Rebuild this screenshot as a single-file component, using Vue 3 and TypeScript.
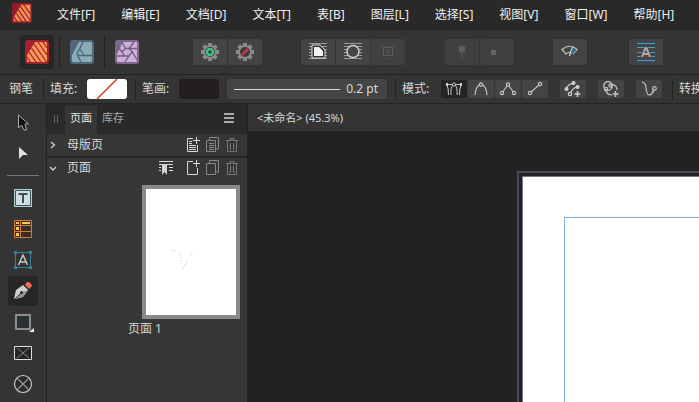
<script setup lang="ts">
import { ref } from 'vue'

const menus: string[] = ['文件[F]', '编辑[E]', '文档[D]', '文本[T]', '表[B]', '图层[L]', '选择[S]', '视图[V]', '窗口[W]', '帮助[H]']
const activeTool = ref('pen')
const activePersona = ref('publisher')
const activeMode = ref(0)
const teeth: number[] = [0, 45, 90, 135, 180, 225, 270, 315]
</script>

<template>
  <div class="app">
    <header class="menubar">
      <svg class="logo" width="20" height="20" viewBox="0 0 24 24" aria-hidden="true">
        <rect width="24" height="24" rx="2" fill="#8f1d2b" />
        <path d="M2 17 11 2H22V22H2Z" fill="#f98d52" />
        <path d="M5 12 12 22M7.500 8 17 22M10 4 22 21M14 2 22 13M2 16 6 22" stroke="#8f1d2b" stroke-width="1.300" />
      </svg>
      <nav class="menus">
        <button v-for="m in menus" :key="m" type="button" class="menu">{{ m }}</button>
      </nav>
    </header>

    <div class="toolbar">
      <div class="personas">
        <button type="button" class="persona" :class="{ on: activePersona === 'publisher' }" aria-label="Publisher" @click="activePersona = 'publisher'">
          <svg width="24" height="24" viewBox="0 0 24 24">
            <rect width="24" height="24" rx="3" fill="#a3202e" />
            <path d="M2 15 10 2H21Q22 2 22 3V21Q22 22 21 22H3Q2 22 2 21Z" fill="#fb9558" />
            <path d="M4 12 11 22M6.500 8 16 22M9 4 21.500 22M13 2 22 15M18 2 22 8M2 17 5.500 22" stroke="#98202c" stroke-width="1.200" />
          </svg>
        </button>
        <i class="sep tall"></i>
        <button type="button" class="persona" :class="{ on: activePersona === 'designer' }" aria-label="Designer" @click="activePersona = 'designer'">
          <svg width="24" height="24" viewBox="0 0 24 24">
            <rect width="24" height="24" rx="3" fill="#50677d" />
            <path d="M2 15 9 2H21Q22 2 22 3V21Q22 22 21 22H3Q2 22 2 21Z" fill="#8aacb7" />
            <path d="M13 2 7 14 11 22M7 15.500H22M10 9 14 15" fill="none" stroke="#49657a" stroke-width="1.300" />
          </svg>
        </button>
        <i class="sep tall"></i>
        <button type="button" class="persona" :class="{ on: activePersona === 'photo' }" aria-label="Photo" @click="activePersona = 'photo'">
          <svg width="24" height="24" viewBox="0 0 24 24">
            <rect width="24" height="24" rx="3" fill="#7d698b" />
            <path d="M2 14 8 2H21Q22 2 22 3V21Q22 22 21 22H3Q2 22 2 21Z" fill="#cbb0d3" />
            <path d="M7 2 10.500 8.500H22M19 2 14 8.500 17.500 12 22 20M17 12 14 16 10 22M14 16H2M9.500 16 7 12 2 6M7 12 10.500 8.500" fill="none" stroke="#725e80" stroke-width="1.300" />
          </svg>
        </button>
      </div>

      <div class="group preflight">
        <button type="button" class="tb" aria-label="预检">
          <svg width="20" height="20" viewBox="0 0 20 20">
            <rect v-for="t in teeth" :key="t" x="8" y="1" width="4" height="4" fill="#8a8a8a" :transform="`rotate(${t} 10 10)`" />
            <circle cx="10" cy="10" r="6" fill="#303c36" stroke="#8a8a8a" stroke-width="2" />
            <circle cx="10" cy="10" r="3" fill="none" stroke="#3fc380" stroke-width="2.600" />
          </svg>
        </button>
        <button type="button" class="tb" aria-label="预检关闭">
          <svg width="20" height="20" viewBox="0 0 20 20">
            <rect v-for="t in teeth" :key="t" x="8" y="1" width="4" height="4" fill="#8a8a8a" :transform="`rotate(${t} 10 10)`" />
            <circle cx="10" cy="10" r="6" fill="#3a3a3a" stroke="#8a8a8a" stroke-width="2" />
            <path d="M7 13 13 7" stroke="#cb3445" stroke-width="2.600" />
          </svg>
        </button>
      </div>

      <div class="group wrap">
        <button type="button" class="tb" aria-label="文本绕排">
          <svg width="20" height="20" viewBox="0 0 20 20" fill="none">
            <path d="M1 1.500H19M1 4.500H19M1 7.500H19M1 10.500H19M1 13.500H19M1 16.500H19" stroke="#9c9c9c" />
            <path d="M4 3H12L17 8V16H4Z" fill="#333" stroke="#ddd" />
            <path d="M6 5H11L15 9V14H6Z" fill="#f2f2f2" />
          </svg>
        </button>
        <button type="button" class="tb" aria-label="绕排轮廓">
          <svg width="20" height="20" viewBox="0 0 20 20" fill="none">
            <path d="M1 1.500H19M1 4.500H19M1 7.500H19M1 10.500H19M1 13.500H19M1 16.500H19" stroke="#9c9c9c" />
            <circle cx="10" cy="9.500" r="6" fill="#454545" stroke="#d4d4d4" stroke-width="1.400" />
          </svg>
        </button>
        <button type="button" class="tb" aria-label="编辑绕排" disabled>
          <svg width="20" height="20" viewBox="0 0 20 20" fill="none">
            <path d="M1 1.500H19M1 4.500H19M1 13.500H19M1 16.500H19" stroke="#494949" />
            <rect x="5.500" y="5.500" width="9" height="8" stroke="#5c5c5c" />
            <path d="M8 7.500 12 11.500M12 7.500 8 11.500" stroke="#606060" />
          </svg>
        </button>
      </div>

      <div class="group anchor">
        <button type="button" class="tb" aria-label="固定" disabled>
          <svg width="20" height="20" viewBox="0 0 20 20">
            <circle cx="10" cy="7" r="3.500" fill="#5c5c5c" /><path d="M10 8V16" stroke="#5c5c5c" />
          </svg>
        </button>
        <button type="button" class="tb" aria-label="内嵌" disabled>
          <svg width="20" height="20" viewBox="0 0 20 20">
            <path d="M1 4.500H19M10 8.500H19M10 11.500H19M1 15.500H19" stroke="#3e3e3e" /><rect x="4" y="8" width="5" height="5" fill="#666" />
          </svg>
        </button>
      </div>

      <div class="group preview">
        <button type="button" class="tb" aria-label="预览模式">
          <svg width="20" height="20" viewBox="0 0 20 20" fill="none">
            <path d="M2 7.500Q9.500 1 17 7.500L13 12Q9.500 9 6 12Z" stroke="#c5c5c5" stroke-width="1.200" />
            <path d="M14 6 16.500 8 13 12H11Z" fill="#2e789f" /><path d="M13 5Q10 9 9.500 14" stroke="#e0e0e0" stroke-width="1.200" />
          </svg>
        </button>
      </div>
      <div class="group baseline">
        <button type="button" class="tb" aria-label="基线网格">
          <svg width="20" height="20" viewBox="0 0 20 20" fill="none">
            <path d="M1 1.500H19M1 5.500H19M1 10.500H19M1 14.500H19M1 18.500H19" stroke="#3da4da" stroke-width="1.200" />
            <path d="M4 15 8 5H12L16 15Z" fill="#484848" />
            <path d="M6 15 9.500 6H10.500L14 15M7.500 12H12.500" stroke="#ababab" stroke-width="2" />
          </svg>
        </button>
      </div>
    </div>

    <div class="context">
      <span class="toolname">钢笔</span>
      <i class="sep"></i>
      <div class="field">
        <label for="fill">填充:</label>
        <button id="fill" type="button" class="swatch none">
          <svg width="40" height="20" viewBox="0 0 40 20"><path d="M10 20 30 0" stroke="#d93b30" stroke-width="1.500" /></svg>
        </button>
      </div>
      <i class="sep"></i>
      <div class="field">
        <label for="stroke">笔画:</label>
        <button id="stroke" type="button" class="swatch dark"></button>
      </div>
      <button type="button" class="width"><i class="line"></i><span>0.2 pt</span></button>
      <i class="sep"></i>
      <span class="modelabel">模式:</span>
      <div class="modes">
        <button type="button" class="mode" :class="{ on: activeMode === 0 }" aria-label="钢笔模式" @click="activeMode = 0">
          <svg width="18" height="16" viewBox="0 0 18 16" fill="none" stroke="#c8c8c8">
            <path d="M3.500 14Q3.500 7 2 4M6 14Q5.500 6 8 4M14.500 14Q14.500 7 16 4M12 14Q12.500 6 10 4M2 3.500H7M11 3.500H16" /><circle cx="9" cy="3.500" r="1.600" /><path d="M1 2h2v3H1zM15 2h2v3h-2z" fill="#d0d0d0" stroke="none" />
          </svg>
        </button>
        <button type="button" class="mode" :class="{ on: activeMode === 1 }" aria-label="智能模式" @click="activeMode = 1">
          <svg width="18" height="16" viewBox="0 0 18 16" fill="none" stroke="#c4c4c4" stroke-width="1.200">
            <path d="M3 14Q4 5 7.500 4M15 14Q14 5 10.500 4" /><circle cx="9" cy="3.500" r="1.600" />
          </svg>
        </button>
        <button type="button" class="mode" :class="{ on: activeMode === 2 }" aria-label="多边形模式" @click="activeMode = 2">
          <svg width="18" height="16" viewBox="0 0 18 16" fill="none" stroke="#c4c4c4" stroke-width="1.200">
            <path d="M4 10.500 8 5M10 5 14 10.500" /><circle cx="9" cy="3.500" r="1.600" /><circle cx="3" cy="12" r="1.600" /><circle cx="15" cy="12" r="1.600" />
          </svg>
        </button>
        <button type="button" class="mode" :class="{ on: activeMode === 3 }" aria-label="直线模式" @click="activeMode = 3">
          <svg width="18" height="16" viewBox="0 0 18 16" fill="none" stroke="#c4c4c4" stroke-width="1.200">
            <path d="M5 11 13 4" /><circle cx="4" cy="12" r="1.600" /><circle cx="14" cy="3" r="1.600" />
          </svg>
        </button>
      </div>
      <button type="button" class="mode" aria-label="添加新曲线">
        <svg width="18" height="16" viewBox="0 0 18 16" fill="none" stroke="#d0d0d0" stroke-width="1.200">
          <path d="M2 8Q4 3 10 2M7 12Q8 7 13 6" /><circle cx="2.500" cy="8" r="1.400" fill="#d0d0d0" /><circle cx="9.500" cy="2" r="1.400" fill="#d0d0d0" /><circle cx="13.500" cy="6" r="1.400" fill="#d0d0d0" /><circle cx="6" cy="13" r="1.600" /><path d="M13.500 10V16M10.500 13H16.500" stroke-width="1.500" />
        </svg>
      </button>
      <button type="button" class="mode" aria-label="合并形状">
        <svg width="18" height="16" viewBox="0 0 18 16" fill="none" stroke="#c4c4c4" stroke-width="1.200">
          <circle cx="6" cy="5" r="4.300" /><path d="M15 9A5 5 0 0 0 8 4M4 8Q4 14 10 14" /><circle cx="8.500" cy="4.500" r="1.600" /><circle cx="4" cy="8" r="1.600" /><path d="M13.500 10V16M10.500 13H16.500" stroke-width="1.500" />
        </svg>
      </button>
      <button type="button" class="mode" aria-label="橡皮筋">
        <svg width="18" height="16" viewBox="0 0 18 16" fill="none" stroke="#c4c4c4" stroke-width="1.200">
          <path d="M2 1Q6 2 6 7 7 14 9 14 12 14 13 10" /><circle cx="14.500" cy="7.500" r="1.800" /><path d="M13 8V12" />
        </svg>
      </button>
      <i class="sep last"></i>
      <span>转换:</span>
    </div>

    <main class="work">
      <aside class="tools">
        <button type="button" class="tool" aria-label="移动工具" :class="{ on: activeTool === 'move' }" @click="activeTool = 'move'">
          <svg width="20" height="20" viewBox="0 0 20 20"><path d="M5.500 3V16L8.500 13 11 18H13.500L12 12H15.500Z" fill="#101010" stroke="#aaa" /></svg>
        </button>
        <button type="button" class="tool node" aria-label="节点工具" :class="{ on: activeTool === 'node' }" @click="activeTool = 'node'">
          <svg width="20" height="20" viewBox="0 0 20 20"><path d="M6 4 15 12H10L6 16Z" fill="#e2e2e2" /></svg>
        </button>
        <i class="rule"></i>
        <button type="button" class="tool" aria-label="文本框工具" :class="{ on: activeTool === 'frame' }" @click="activeTool = 'frame'">
          <svg width="20" height="20" viewBox="0 0 20 20"><path d="M1 1H19V19H1Z" fill="#b3d2d7" /><path d="M2.500 2.500H17.500V17.500H2.500Z" fill="#d5dde0" stroke="#365764" /><path d="M5.500 6H14.500M10 6V15" stroke="#344f62" stroke-width="2" /></svg>
        </button>
        <button type="button" class="tool" aria-label="表格工具" :class="{ on: activeTool === 'table' }" @click="activeTool = 'table'">
          <svg width="20" height="20" viewBox="0 0 20 20" fill="none"><path d="M1.500 1.500H18.500V18.500H1.500ZM1.500 6.500H18.500M1.500 12.500H18.500M7.500 1.500V18.500" fill="#3c2b24" stroke="#d27b3b" /><path d="M3 3h3v2H3zM9 3h8v2H9zM3 8h3v3H3zM3 14h3v3H3z" fill="#f0c75c" /></svg>
        </button>
        <button type="button" class="tool" aria-label="美术字工具" :class="{ on: activeTool === 'art' }" @click="activeTool = 'art'">
          <svg width="20" height="20" viewBox="0 0 20 20" fill="none"><path d="M2.500 2.500H17.500V17.500H2.500Z" stroke="#397b9d" /><path d="M1 1h3v3H1zM16 1h3v3h-3zM1 16h3v3H1zM16 16h3v3h-3z" fill="#397b9d" /><path d="M5.500 15 10 5 14.500 15M7 12H13" stroke="#c8c8c8" stroke-width="1.400" /></svg>
        </button>
        <button type="button" class="tool" aria-label="钢笔工具" :class="{ on: activeTool === 'pen' }" @click="activeTool = 'pen'">
          <svg width="20" height="20" viewBox="0 0 20 20"><path d="M1 18 3 9 10 4 15 9 10 16Z" fill="#cfcfcf" /><path d="M2 18 8 11.500 15 9 10 16Z" fill="#929292" /><path d="M2 18 8 12" stroke="#333" /><circle cx="8.500" cy="11.500" r="1.500" fill="#292929" /><path d="M12 4 14 1H16L19 4V5L16 8Z" fill="#ed6a54" /></svg>
        </button>
        <button type="button" class="tool shape" aria-label="矩形工具" :class="{ on: activeTool === 'rect' }" @click="activeTool = 'rect'">
          <svg width="24" height="20" viewBox="0 0 24 20"><rect x="5" y="3" width="14" height="14" fill="#283234" stroke="#8d8d8d" stroke-width="2" /><path d="M23 16V20H18Z" fill="#eee" /></svg>
        </button>
        <button type="button" class="tool" aria-label="图片框矩形工具" :class="{ on: activeTool === 'pic' }" @click="activeTool = 'pic'">
          <svg width="20" height="20" viewBox="0 0 20 20"><path d="M1.500 3.500H18.500V16.500H1.500Z" fill="#252525" stroke="#e0e0e0" /><path d="M4 5 16 15M16 5 4 15" stroke="#858585" /></svg>
        </button>
        <button type="button" class="tool" aria-label="图片框椭圆工具" :class="{ on: activeTool === 'oval' }" @click="activeTool = 'oval'">
          <svg width="20" height="20" viewBox="0 0 20 20"><circle cx="10" cy="10" r="8.500" fill="#292929" stroke="#ccc" stroke-width="1.200" /><path d="M5 5 15 15M15 5 5 15" stroke="#999" stroke-width="1.200" /></svg>
        </button>
      </aside>

      <section class="panel">
        <div class="tabs">
          <i class="grip"></i>
          <button type="button" class="tab on">页面</button>
          <button type="button" class="tab">库存</button>
          <button type="button" class="burger" aria-label="面板菜单"><i></i><i></i><i></i></button>
        </div>
        <div class="row masters">
          <button type="button" class="fold"><svg width="8" height="8" viewBox="0 0 8 8" fill="none"><path d="M2 1 5.500 4 2 7" stroke="#d0d0d0" stroke-width="1.400" /></svg>母版页</button>
          <div class="acts">
            <button type="button" class="act" aria-label="添加母版"><svg width="14" height="16" viewBox="0 0 14 16" fill="none"><path d="M7 1.500H1.500V14.500H11.500V8M10.500 0V7M7 3.500H14M3 4.500H6M3 6.500H6M3 8.500H10M3 10.500H10M3 12.500H10" stroke="#d8d8d8" /></svg></button>
            <button type="button" class="act dim" aria-label="复制母版"><svg width="14" height="16" viewBox="0 0 14 16" fill="none"><path d="M3.500 3V.500H12.500V12H10M1 3.500H9.500V14.500H.500V3.500M3 6.500H8M3 8.500H8M3 10.500H8M3 12.500H8" stroke="#888" /></svg></button>
            <button type="button" class="act dim" aria-label="删除母版"><svg width="12" height="16" viewBox="0 0 12 16" fill="none"><path d="M0 3.500H12M4 3V1.500H8V3M1.500 4V14.500H10.500V4M4.500 6V13M7.500 6V13" stroke="#777" /></svg></button>
          </div>
        </div>
        <div class="row pages">
          <button type="button" class="fold"><svg width="8" height="8" viewBox="0 0 8 8" fill="none"><path d="M1 3 4 6 7 3" stroke="#d0d0d0" stroke-width="1.400" /></svg>页面</button>
          <div class="acts">
            <button type="button" class="act mark" aria-label="章节管理器"><svg width="14" height="16" viewBox="0 0 14 16"><path d="M0 1.500H14M0 4.500H14M0 7.500H2M0 10.500H2M10 7.500H14M10 10.500H14" stroke="#ddd" /><path d="M3 4H8V15L5.500 12 3 15Z" fill="#d4d4d4" /></svg></button>
            <button type="button" class="act" aria-label="添加页面"><svg width="14" height="16" viewBox="0 0 14 16" fill="none"><path d="M7 1.500H1.500V14.500H11.500V8M10.500 0V7M7 3.500H14" stroke="#d8d8d8" /></svg></button>
            <button type="button" class="act dim" aria-label="复制页面"><svg width="14" height="16" viewBox="0 0 14 16" fill="none"><path d="M3.500 3V.500H12.500V12H10M1 3.500H9.500V14.500H.500V3.500" stroke="#888" /></svg></button>
            <button type="button" class="act dim" aria-label="删除页面"><svg width="12" height="16" viewBox="0 0 12 16" fill="none"><path d="M0 3.500H12M4 3V1.500H8V3M1.500 4V14.500H10.500V4M4.500 6V13M7.500 6V13" stroke="#777" /></svg></button>
          </div>
        </div>
        <div class="thumbs">
          <figure class="page">
            <div class="thumb">
              <svg width="90" height="126" viewBox="0 0 90 126" fill="none"><path d="M25 61.500H30M32 63Q36 67 35.500 72M37 79 42 71M44 66 47 61" stroke="#bbb" stroke-dasharray="1 2" /></svg>
            </div>
            <figcaption>页面 1</figcaption>
          </figure>
        </div>
      </section>

      <section class="document">
        <div class="doctab">&lt;未命名&gt; (45.3%)</div>
        <div class="canvas">
          <div class="bleed"><div class="sheet"><div class="guide"></div></div></div>
        </div>
      </section>
    </main>
  </div>
</template>

<style>
body { margin: 0; background: #222; }
</style>

<style scoped>
* { box-sizing: border-box; }
.app { display: flex; flex-direction: column; height: 100vh; overflow: hidden; background: #343434; color: #d8d8d8; font: 12px/16px "Noto Sans", "Noto Sans CJK SC", sans-serif; }
button { display: flex; align-items: center; justify-content: center; flex: none; margin: 0; padding: 0; border: 0; background: none; color: inherit; font: inherit; }
svg { display: block; flex: none; }
.menubar, .toolbar, .context { display: flex; flex: none; overflow: hidden; white-space: nowrap; }
.menubar { height: 30px; padding-left: 12px; background: #292929; border-bottom: 1px solid #222; align-items: center; }
.logo { margin-bottom: 3px; }
.menus { display: flex; gap: 26px; margin-left: 25px; padding-top: 1px; color: #f0f0f0; }

.toolbar { height: 45px; padding: 0 20px; align-items: center; border-bottom: 1px solid #222; }
.personas, .group { display: flex; flex: none; align-items: center; }
.personas { gap: 5px; }
.persona { width: 34px; height: 34px; border-radius: 3px; }
.persona.on { background: #262626; }
.sep { flex: none; width: 1px; height: 21px; background: #222; }
.tall { height: 34px; }
.group { gap: 1px; }
.tb { width: 34px; height: 26px; border-radius: 2px; background: #444; }
.tb:disabled { background: #404040; }
.preflight { margin-left: 49px; }
.wrap, .preview { margin-left: 39px; }
.anchor { margin-left: 40px; }
.baseline { margin-left: 42px; }

.context { height: 29px; padding-left: 9px; align-items: center; border-bottom: 1px solid #222; }
.toolname { margin-right: 10px; }
.field { display: flex; flex: none; align-items: center; justify-content: space-between; width: 77px; margin: 0 8px 0 6px; }
.swatch { width: 40px; height: 20px; border-radius: 3px; overflow: hidden; }
.none { background: #fff; }
.dark { background: #231f20; }
.width { width: 160px; height: 20px; padding: 0 9px 0 7px; margin-right: 8px; border-radius: 3px; background: #444; justify-content: space-between; gap: 6px; }
.line { flex: 1; height: 1px; background: #ddd; }
.modelabel { width: 39px; margin-left: 6px; flex: none; }
.modes { display: flex; flex: none; gap: 1px; }
.mode { width: 26px; height: 18px; border-radius: 2px; background: #444; }
.mode.on { background: #242424; }
.context > .mode { margin-left: 12px; }
.last { margin: 0 6px 0 10px; }

.work { display: flex; flex: 1; min-height: 0; }
.tools { display: flex; flex-direction: column; flex: none; align-items: center; width: 47px; padding-top: 3px; border-right: 1px solid #222; gap: 1px; }
.tool { width: 30px; height: 30px; border-radius: 3px; }
.tool.on { background: #262626; }
.rule { flex: none; width: 32px; height: 1px; margin: 6px 0; background: #777; }

.panel { display: flex; flex-direction: column; flex: none; width: 201px; border-right: 1px solid #222; background: #363636; }
.tabs { display: flex; flex: none; height: 30px; padding-top: 2px; background: #292929; font-size: 11px; }
.grip { width: 4px; height: 8px; margin: 9px 7px; border: solid #666; border-width: 0 1px; }
.tab { width: 32px; color: #aaa; padding-bottom: 4px; }
.tab.on { background: #363636; color: #e4e4e4; }
.burger { flex-direction: column; gap: 2px; width: 10px; margin: 0 13px 4px auto; }
.burger i { width: 10px; height: 2px; background: #aaa; }
.row { display: flex; flex: none; justify-content: space-between; align-items: center; height: 24px; padding: 0 9px 0 2px; }
.masters { border-bottom: 2px solid #252525; }
.pages { height: 20px; }
.fold { gap: 10px; height: 20px; }
.acts { display: flex; align-items: center; gap: 6px; }
.act { height: 16px; }
.mark { margin-right: 7px; }
.thumbs { display: flex; justify-content: flex-end; padding: 7px 7px 0 0; }
.page { display: flex; flex-direction: column; gap: 2px; margin: 0; }
.thumb { border: 4px solid #8a8a8a; background: #fff; }
.page figcaption { width: 64px; margin-left: -14px; }

.document { display: flex; flex-direction: column; flex: 1; min-width: 0; background: #222; }
.doctab { flex: none; height: 28px; padding: 6px 9px; border-bottom: 1px solid #222; background: #343434; font-size: 11px; }
.canvas { display: flex; flex: 1; min-height: 0; padding: 39px 0 0 269px; overflow: hidden; }
.bleed { display: flex; flex: 1; padding: 3px 0 0 3px; border: solid #4b4763; border-width: 2px 0 0 2px; }
.sheet { display: flex; flex: 1; padding: 40px 0 0 41px; background: #fff; background-clip: padding-box; border: solid #777; border-width: 1px 0 0 1px; }
.guide { flex: 1; border: solid #7db1d1; border-width: 1px 0 0 1px; }
</style>
